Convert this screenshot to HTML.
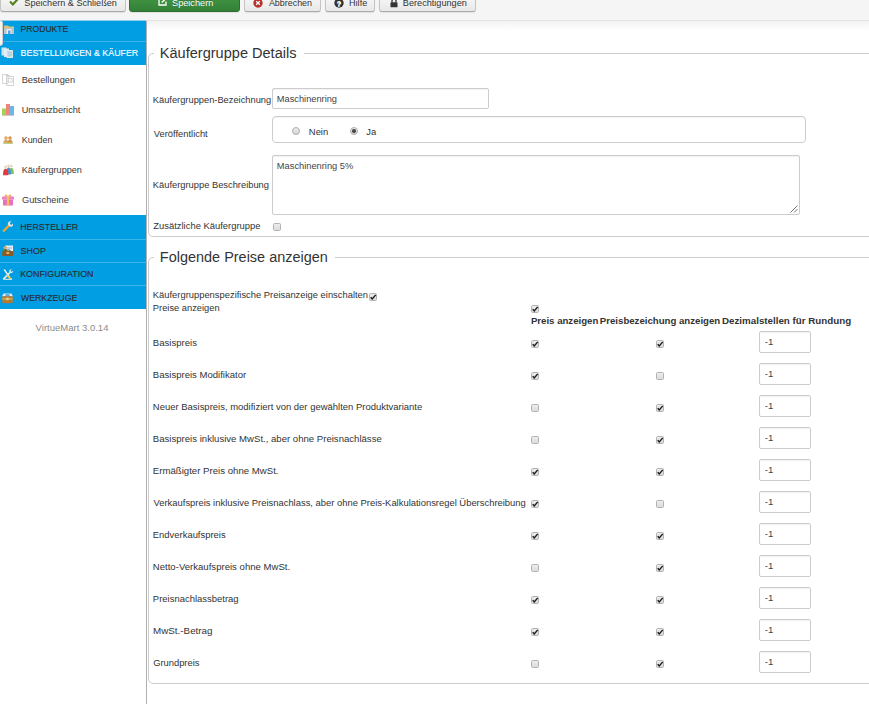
<!DOCTYPE html>
<html lang="de">
<head>
<meta charset="utf-8">
<title>Käufergruppe</title>
<style>
*{box-sizing:border-box;}
html,body{margin:0;padding:0;}
body{width:869px;height:704px;overflow:hidden;background:#fff;font-family:"Liberation Sans",Arial,sans-serif;font-size:11px;color:#333;position:relative;}
#toolbar{position:absolute;left:0;top:0;width:869px;height:21px;background:#f5f5f5;border-bottom:1px solid #e2e2e2;}
#mix{position:absolute;left:0;top:20px;width:146px;height:1px;background:#8fcfee;}
.btn{position:absolute;top:-12px;height:24px;border:1px solid #c4c4c4;border-bottom-color:#a9a9a9;border-radius:3px;background:linear-gradient(#fff,#e8e8e8);font-size:9px;color:#333;line-height:22px;white-space:nowrap;box-shadow:0 1px 1px rgba(0,0,0,.08);text-shadow:0 1px 0 #fff;}
.btn.green{background:linear-gradient(#4aa34a,#337f37);border-color:#2d6f2e;color:#fff;text-shadow:0 -1px 0 rgba(0,0,0,.3);}
.btn span{position:absolute;top:9.5px;line-height:10px;}
.ti{position:absolute;}
#shade{position:absolute;left:147px;top:21px;width:722px;height:10px;background:linear-gradient(#f3f3f3,#fff);}
#side{position:absolute;left:0;top:0;width:146px;height:704px;}
.hdbg{position:absolute;left:0;width:146px;background:#019ee3;}
.hd{position:absolute;left:21px;height:12px;line-height:12px;font-size:8.75px;color:#333;white-space:nowrap;}
.hd.act{color:#fff;}
.sep{position:absolute;left:0;width:146px;height:1px;background:#3bb3ea;}
.it{position:absolute;left:22.500px;height:12px;line-height:12px;font-size:9.100px;color:#444;white-space:nowrap;}
.si{position:absolute;}
#tab{position:absolute;left:-2px;top:20px;width:5.200px;height:26px;background:#f6f6f6;border:1px solid #d0d0d0;border-radius:0 3px 3px 0;}
#vline{position:absolute;left:146px;top:21px;width:1px;height:690px;background:#b0b0b0;}
#ver{position:absolute;left:0;top:321px;width:146px;text-align:center;font-size:9.5px;color:#8a8a8a;}
.fs{position:absolute;left:148px;width:740px;border:1px solid #ccc;border-radius:5px;}
.gap{position:absolute;height:1px;background:#fff;}
.lbl{position:absolute;font-size:9.4px;color:#333;white-space:nowrap;}
.inp{position:absolute;border:1px solid #ccc;border-radius:2px;background:#fff;box-shadow:inset 0 1px 1px rgba(0,0,0,.05);}
.cb{position:absolute;width:8px;height:8px;border:1px solid #b2b2b2;border-radius:1.5px;background:linear-gradient(#ececec,#dcdcdc);}
.cb.on:after{content:"";position:absolute;left:1.6px;top:-1.2px;width:2.6px;height:5.2px;border:solid #222;border-width:0 1.5px 1.5px 0;transform:rotate(40deg);}
.lbl.b{font-weight:bold;}
.rd{position:absolute;width:8px;height:8px;border:1px solid #adadad;border-radius:50%;background:linear-gradient(#ececec,#d6d6d6);}
.rd.on:after{content:"";position:absolute;left:1.3px;top:1.3px;width:3.4px;height:3.4px;border-radius:50%;background:#4a4a4a;}
.t{position:absolute;white-space:nowrap;height:20px;line-height:20px;}
</style>
</head>
<body>
<div id="toolbar">
 <div class="btn" style="left:0px;width:126px;"><svg class="ti" style="left:8px;top:8px;" width="11" height="9" viewBox="0 0 11 9"><path d="M1 4.6L3.9 7.4L9.6 1.2" stroke="#567d1d" stroke-width="2.1" fill="none"/></svg></div>
 <div class="btn green" style="left:129px;width:111px;"><svg class="ti" style="left:28px;top:8px;" width="9" height="9" viewBox="0 0 9 9"><path d="M6 1H1V8H8V4.5" stroke="#fff" stroke-width="1.3" fill="none"/><path d="M3.5 6L4 4.3L7.6 0.6L8.6 1.6L5 5.4Z" fill="#fff"/></svg></div>
 <div class="btn" style="left:244px;width:77px;"><svg class="ti" style="left:8px;top:8.500px;" width="10" height="10" viewBox="0 0 10 10"><circle cx="5" cy="5" r="4.7" fill="#b5332c"/><path d="M3.2 3.2L6.8 6.8M6.8 3.2L3.2 6.8" stroke="#fff" stroke-width="1.3"/></svg></div>
 <div class="btn" style="left:325px;width:50px;"><svg class="ti" style="left:8px;top:8.500px;" width="10" height="10" viewBox="0 0 10 10"><circle cx="5" cy="5" r="4.7" fill="#333"/><text x="5" y="8" font-size="8" font-weight="bold" font-family="Liberation Sans, sans-serif" text-anchor="middle" fill="#fff">?</text></svg></div>
 <div class="btn" style="left:379px;width:97px;"><svg class="ti" style="left:10px;top:8.500px;" width="8" height="10" viewBox="0 0 8 10"><path d="M2 4.5V3a2 2 0 0 1 4 0V4.5" stroke="#333" stroke-width="1.3" fill="none"/><rect x="0.5" y="4.3" width="7" height="5" rx="0.6" fill="#333"/></svg></div>
</div>
<div id="shade"></div><div id="mix"></div>
<div id="side">
 <div class="hdbg" style="top:21px;height:21px;"></div>
 <div class="hdbg" style="top:42px;height:22.5px;"></div>
 <div class="hdbg" style="top:214.5px;height:23.7px;"></div>
 <div class="hdbg" style="top:238.2px;height:23.7px;"></div>
 <div class="hdbg" style="top:261.9px;height:23.7px;"></div>
 <div class="hdbg" style="top:285.6px;height:23.7px;"></div>
 <div class="sep" style="top:41px;"></div>
 <div class="sep" style="top:239px;"></div>
 <div class="sep" style="top:262px;"></div>
 <div class="sep" style="top:285px;"></div>
 <svg class="si" style="left:4px;top:24px;" width="10" height="10" viewBox="0 0 10 10"><path d="M0 1.5h4l1 1h5v3H0z" fill="#d9c27a"/><rect x="0" y="4" width="10" height="6" fill="#b9c3c9"/><rect x="2.5" y="5" width="5" height="5" fill="#e8edf0"/><rect x="4" y="6.5" width="2.5" height="3.5" fill="#5aa7e0"/></svg>
 <svg class="si" style="left:1px;top:47px;" width="13" height="11" viewBox="0 0 13 11"><rect x="0.5" y="0.5" width="5" height="8" fill="#cfe3ef"/><rect x="3" y="1.5" width="5" height="8.5" fill="#e4eef4"/><rect x="5.5" y="3" width="6.5" height="8" fill="#dbe6ec"/><rect x="6.5" y="4.5" width="4.5" height="5" fill="#b7d3e3"/></svg>
 <svg class="si" style="left:2px;top:73.5px;" width="12" height="12" viewBox="0 0 12 12"><path d="M0.5 0.5h5.5v9h-5.5z M3.5 1.5h4l1.5 1.5M4.5 2.5h7v9h-7z M6.2 4.5h4v3.5h-4z" fill="none" stroke="#cfcfcf" stroke-width="0.9"/></svg>
 <svg class="si" style="left:2px;top:104px;" width="12" height="12" viewBox="0 0 12 12"><rect x="0" y="4.5" width="4" height="7" fill="#a4d05a"/><rect x="4" y="0" width="4" height="11.5" fill="#ef8778"/><rect x="8" y="2" width="4" height="9.5" fill="#6bb7ea"/><rect x="0" y="11" width="12" height="0.8" fill="#c8c8c8"/></svg>
 <svg class="si" style="left:3px;top:135.5px;" width="10" height="8" viewBox="0 0 10 8"><circle cx="3" cy="2" r="1.8" fill="#e0a85c"/><circle cx="7" cy="2" r="1.8" fill="#d99a4e"/><path d="M0.3 7.5c0-3 1.2-4 2.7-4s2.4 1 2.4 4z" fill="#dba763"/><path d="M4.6 7.5c0-3 1-4 2.4-4s2.7 1 2.7 4z" fill="#d19550"/><rect x="0.3" y="6.7" width="9.4" height="1" fill="#b5cf7a"/></svg>
 <svg class="si" style="left:3px;top:164px;" width="11" height="11.5" viewBox="0 0 11 11.5"><circle cx="8.3" cy="2.2" r="1.4" fill="#e9d9c0"/><path d="M6 10c0-4.5 1-6 2.4-6s2.4 1.500 2.400 6z" fill="#7fc25a"/><circle cx="5.500" cy="1.800" r="1.400" fill="#ead6bb"/><path d="M3.200 10.500c0-5 1-7 2.400-7s2.400 2 2.400 7z" fill="#4d8fd6"/><circle cx="2.600" cy="3" r="1.400" fill="#ecd8c0"/><path d="M0 11.300c0-4.500 1-6.500 2.600-6.500s2.700 2 2.700 6.500z" fill="#e23b3b"/></svg>
 <svg class="si" style="left:2px;top:194px;" width="12" height="11.5" viewBox="0 0 12 11.5"><path d="M3 2.500c-1.500-2.500 2-3 3 0c1-3 4.500-2.500 3 0z" fill="#e8b84a"/><rect x="0" y="2.500" width="12" height="3" rx="0.500" fill="#f07fc7"/><rect x="1" y="5.500" width="10" height="6" fill="#ea6fc0"/><rect x="4.800" y="2.500" width="2.400" height="9" fill="#f0c35a"/></svg>
 <svg class="si" style="left:1.500px;top:221px;" width="11.500" height="11" viewBox="0 0 11.500 11"><path d="M0.800 9.200L6.200 3.600L7.800 5.200L2.400 10.700Q1.400 11.200 0.800 10.400Q0.300 9.800 0.800 9.200z" fill="#f2a62e"/><path d="M6 3.800C5.200 1.800 7 -0.300 9.300 0.400L7.800 2L8.300 3.400L9.700 3.800L11.200 2.300C11.800 4.600 9.800 6.300 7.700 5.600z" fill="#dfe6ea"/></svg>
 <svg class="si" style="left:1.500px;top:245px;" width="11.500" height="11" viewBox="0 0 11.500 11"><rect x="3.500" y="0.500" width="7.500" height="6" fill="#e9f2f8"/><rect x="4.500" y="2.500" width="5.500" height="1" fill="#7db6e0"/><circle cx="3" cy="2.600" r="1.700" fill="#d9a066"/><path d="M0.500 7c0-2 1-3 2.500-3s2.500 1 2.500 3z" fill="#5d8a3a"/><rect x="0.300" y="6" width="11" height="5" rx="0.600" fill="#8a5a2b"/><rect x="4.300" y="7" width="3" height="2" fill="#d9b25a"/><path d="M3.500 6V5h4.500v1" stroke="#5a3a1a" stroke-width="0.800" fill="none"/></svg>
 <svg class="si" style="left:1.500px;top:268.500px;" width="11.500" height="11" viewBox="0 0 11.500 11"><path d="M1.500 0.800L3 0.300L8.500 8.500L10.500 10.500L8.500 9.800L7 8.800z" fill="#eef3f6"/><path d="M9.800 0.300C8 0 6.800 1.500 7.300 3L1 9.300Q0.500 10.300 1.500 10.700Q2.200 10.800 2.600 10.300L8.500 4C10 4.500 11.500 3 11 1.500L9.800 2.800L8.800 2.400L8.600 1.500z" fill="#e3eaee"/><path d="M5.500 6L9.500 9.500L8.300 10.700L4.500 7z" fill="#e8c23a"/><rect x="2" y="9.800" width="8" height="1.100" fill="#d8e4ea"/></svg>
 <svg class="si" style="left:1.500px;top:293px;" width="11" height="10.500" viewBox="0 0 11 10.500"><path d="M1.500 0.500h8l1.500 3h-11z" fill="#dfeaf2"/><rect x="3.500" y="1" width="4" height="3" fill="#6aa8dc"/><rect x="0.300" y="3.200" width="10.400" height="7" rx="0.800" fill="#b07a32"/><rect x="0.300" y="5.300" width="10.400" height="1.200" fill="#e3b85a"/><rect x="4.300" y="4.600" width="2.400" height="2.600" fill="#f1d27a"/></svg>
 <div id="tab"></div>
</div>
<div id="vline"></div>

<div class="fs" style="top:53px;height:184px;"></div><div class="gap" style="top:53px;left:154px;width:150px;"></div>
<div class="fs" style="top:257px;height:427px;"></div><div class="gap" style="top:257px;left:154px;width:181px;"></div>




<!--GEN-->
<div class="inp" style="left:272px;top:88px;width:217px;height:21px;"></div>
<div class="inp" style="left:272px;top:116px;width:534px;height:26.6px;border-radius:4px;"></div>
<div class="rd" style="left:292px;top:127px;"></div>
<div class="rd on" style="left:350px;top:127px;"></div>
<div class="inp" style="left:272px;top:155px;width:528px;height:59.7px;"><svg style="position:absolute;right:1px;bottom:1px;" width="9" height="9" viewBox="0 0 9 9"><path d="M8.5 1.5L1.5 8.5M8.5 5L5 8.500" stroke="#666" stroke-width="0.9" fill="none"/></svg></div>
<div class="cb" style="left:272.500px;top:223.300px;"></div>
<div class="cb" style="left:369.200px;top:292.500px;"><svg width="8" height="8" viewBox="0 0 8 8" style="position:absolute;left:-1px;top:-1px;overflow:visible"><path d="M1.700 4.200L3.300 5.900L6.700 1.900" stroke="#1c1c1c" stroke-width="1.450" fill="none"/></svg></div>
<div class="cb" style="left:531px;top:305px;"><svg width="8" height="8" viewBox="0 0 8 8" style="position:absolute;left:-1px;top:-1px;overflow:visible"><path d="M1.700 4.200L3.300 5.900L6.700 1.900" stroke="#1c1c1c" stroke-width="1.450" fill="none"/></svg></div>
<div class="cb" style="left:531px;top:340px;"><svg width="8" height="8" viewBox="0 0 8 8" style="position:absolute;left:-1px;top:-1px;overflow:visible"><path d="M1.700 4.200L3.300 5.900L6.700 1.900" stroke="#1c1c1c" stroke-width="1.450" fill="none"/></svg></div>
<div class="cb" style="left:656.300px;top:340px;"><svg width="8" height="8" viewBox="0 0 8 8" style="position:absolute;left:-1px;top:-1px;overflow:visible"><path d="M1.700 4.200L3.300 5.900L6.700 1.900" stroke="#1c1c1c" stroke-width="1.450" fill="none"/></svg></div>
<div class="inp" style="left:759px;top:331px;width:52px;height:22px;"></div>
<div class="cb" style="left:531px;top:372px;"><svg width="8" height="8" viewBox="0 0 8 8" style="position:absolute;left:-1px;top:-1px;overflow:visible"><path d="M1.700 4.200L3.300 5.900L6.700 1.900" stroke="#1c1c1c" stroke-width="1.450" fill="none"/></svg></div>
<div class="cb" style="left:656.300px;top:372px;"></div>
<div class="inp" style="left:759px;top:363px;width:52px;height:22px;"></div>
<div class="cb" style="left:531px;top:404px;"></div>
<div class="cb" style="left:656.300px;top:404px;"><svg width="8" height="8" viewBox="0 0 8 8" style="position:absolute;left:-1px;top:-1px;overflow:visible"><path d="M1.700 4.200L3.300 5.900L6.700 1.900" stroke="#1c1c1c" stroke-width="1.450" fill="none"/></svg></div>
<div class="inp" style="left:759px;top:395px;width:52px;height:22px;"></div>
<div class="cb" style="left:531px;top:436px;"></div>
<div class="cb" style="left:656.300px;top:436px;"><svg width="8" height="8" viewBox="0 0 8 8" style="position:absolute;left:-1px;top:-1px;overflow:visible"><path d="M1.700 4.200L3.300 5.900L6.700 1.900" stroke="#1c1c1c" stroke-width="1.450" fill="none"/></svg></div>
<div class="inp" style="left:759px;top:427px;width:52px;height:22px;"></div>
<div class="cb" style="left:531px;top:468px;"><svg width="8" height="8" viewBox="0 0 8 8" style="position:absolute;left:-1px;top:-1px;overflow:visible"><path d="M1.700 4.200L3.300 5.900L6.700 1.900" stroke="#1c1c1c" stroke-width="1.450" fill="none"/></svg></div>
<div class="cb" style="left:656.300px;top:468px;"><svg width="8" height="8" viewBox="0 0 8 8" style="position:absolute;left:-1px;top:-1px;overflow:visible"><path d="M1.700 4.200L3.300 5.900L6.700 1.900" stroke="#1c1c1c" stroke-width="1.450" fill="none"/></svg></div>
<div class="inp" style="left:759px;top:459px;width:52px;height:22px;"></div>
<div class="cb" style="left:531px;top:500px;"><svg width="8" height="8" viewBox="0 0 8 8" style="position:absolute;left:-1px;top:-1px;overflow:visible"><path d="M1.700 4.200L3.300 5.900L6.700 1.900" stroke="#1c1c1c" stroke-width="1.450" fill="none"/></svg></div>
<div class="cb" style="left:656.300px;top:500px;"></div>
<div class="inp" style="left:759px;top:491px;width:52px;height:22px;"></div>
<div class="cb" style="left:531px;top:532px;"><svg width="8" height="8" viewBox="0 0 8 8" style="position:absolute;left:-1px;top:-1px;overflow:visible"><path d="M1.700 4.200L3.300 5.900L6.700 1.900" stroke="#1c1c1c" stroke-width="1.450" fill="none"/></svg></div>
<div class="cb" style="left:656.300px;top:532px;"><svg width="8" height="8" viewBox="0 0 8 8" style="position:absolute;left:-1px;top:-1px;overflow:visible"><path d="M1.700 4.200L3.300 5.900L6.700 1.900" stroke="#1c1c1c" stroke-width="1.450" fill="none"/></svg></div>
<div class="inp" style="left:759px;top:523px;width:52px;height:22px;"></div>
<div class="cb" style="left:531px;top:564px;"></div>
<div class="cb" style="left:656.300px;top:564px;"><svg width="8" height="8" viewBox="0 0 8 8" style="position:absolute;left:-1px;top:-1px;overflow:visible"><path d="M1.700 4.200L3.300 5.900L6.700 1.900" stroke="#1c1c1c" stroke-width="1.450" fill="none"/></svg></div>
<div class="inp" style="left:759px;top:555px;width:52px;height:22px;"></div>
<div class="cb" style="left:531px;top:596px;"><svg width="8" height="8" viewBox="0 0 8 8" style="position:absolute;left:-1px;top:-1px;overflow:visible"><path d="M1.700 4.200L3.300 5.900L6.700 1.900" stroke="#1c1c1c" stroke-width="1.450" fill="none"/></svg></div>
<div class="cb" style="left:656.300px;top:596px;"><svg width="8" height="8" viewBox="0 0 8 8" style="position:absolute;left:-1px;top:-1px;overflow:visible"><path d="M1.700 4.200L3.300 5.900L6.700 1.900" stroke="#1c1c1c" stroke-width="1.450" fill="none"/></svg></div>
<div class="inp" style="left:759px;top:587px;width:52px;height:22px;"></div>
<div class="cb" style="left:531px;top:628px;"><svg width="8" height="8" viewBox="0 0 8 8" style="position:absolute;left:-1px;top:-1px;overflow:visible"><path d="M1.700 4.200L3.300 5.900L6.700 1.900" stroke="#1c1c1c" stroke-width="1.450" fill="none"/></svg></div>
<div class="cb" style="left:656.300px;top:628px;"><svg width="8" height="8" viewBox="0 0 8 8" style="position:absolute;left:-1px;top:-1px;overflow:visible"><path d="M1.700 4.200L3.300 5.900L6.700 1.900" stroke="#1c1c1c" stroke-width="1.450" fill="none"/></svg></div>
<div class="inp" style="left:759px;top:619px;width:52px;height:22px;"></div>
<div class="cb" style="left:531px;top:660px;"></div>
<div class="cb" style="left:656.300px;top:660px;"><svg width="8" height="8" viewBox="0 0 8 8" style="position:absolute;left:-1px;top:-1px;overflow:visible"><path d="M1.700 4.200L3.300 5.900L6.700 1.900" stroke="#1c1c1c" stroke-width="1.450" fill="none"/></svg></div>
<div class="inp" style="left:759px;top:651px;width:52px;height:22px;"></div>
<span class="t" style="left:24.34px;top:-7.45px;font-size:9.10px;color:#333;">Speichern &amp; Schließen</span>
<span class="t" style="left:172.03px;top:-7.48px;font-size:9.19px;color:#fff;text-shadow:0 -1px 0 rgba(0,0,0,.25);">Speichern</span>
<span class="t" style="left:268.90px;top:-7.39px;font-size:8.93px;color:#333;">Abbrechen</span>
<span class="t" style="left:349.08px;top:-7.44px;font-size:9.05px;color:#333;">Hilfe</span>
<span class="t" style="left:402.86px;top:-7.46px;font-size:9.13px;color:#333;">Berechtigungen</span>
<span class="t" style="left:20.60px;top:18.52px;font-size:8.59px;color:#2b2b2b;-webkit-text-stroke:0.12px #2b2b2b;">PRODUKTE</span>
<span class="t" style="left:20.58px;top:42.53px;font-size:8.87px;color:#fff;-webkit-text-stroke:0.12px #fff;">BESTELLUNGEN &amp; KÄUFER</span>
<span class="t" style="left:21.65px;top:70.49px;font-size:9.25px;color:#383838;">Bestellungen</span>
<span class="t" style="left:21.75px;top:99.52px;font-size:9.19px;color:#383838;">Umsatzbericht</span>
<span class="t" style="left:21.68px;top:129.60px;font-size:8.95px;color:#383838;">Kunden</span>
<span class="t" style="left:21.67px;top:159.54px;font-size:9.12px;color:#383838;">Käufergruppen</span>
<span class="t" style="left:21.94px;top:190.49px;font-size:9.27px;color:#383838;">Gutscheine</span>
<span class="t" style="left:20.18px;top:216.73px;font-size:8.86px;color:#2b2b2b;-webkit-text-stroke:0.12px #2b2b2b;">HERSTELLER</span>
<span class="t" style="left:20.54px;top:240.50px;font-size:8.95px;color:#2b2b2b;-webkit-text-stroke:0.12px #2b2b2b;">SHOP</span>
<span class="t" style="left:20.20px;top:264.12px;font-size:8.89px;color:#2b2b2b;-webkit-text-stroke:0.12px #2b2b2b;">KONFIGURATION</span>
<span class="t" style="left:20.92px;top:287.77px;font-size:8.75px;color:#2b2b2b;-webkit-text-stroke:0.12px #2b2b2b;">WERKZEUGE</span>
<span class="t" style="left:35.61px;top:317.70px;font-size:9.53px;color:#8c8c8c;">VirtueMart 3.0.14</span>
<span class="t" style="left:159.84px;top:42.96px;font-size:14.55px;color:#333;">Käufergruppe Details</span>
<span class="t" style="left:159.87px;top:246.79px;font-size:14.46px;color:#333;">Folgende Preise anzeigen</span>
<span class="t" style="left:152.82px;top:89.77px;font-size:9.31px;color:#333;">Käufergruppen-Bezeichnung</span>
<span class="t" style="left:276.86px;top:89.19px;font-size:9.25px;color:#444;">Maschinenring</span>
<span class="t" style="left:153.79px;top:123.65px;font-size:9.37px;color:#333;">Veröffentlicht</span>
<span class="t" style="left:308.85px;top:121.74px;font-size:9.42px;color:#333;">Nein</span>
<span class="t" style="left:366.31px;top:121.74px;font-size:9.42px;color:#333;">Ja</span>
<span class="t" style="left:276.85px;top:155.78px;font-size:9.29px;color:#444;">Maschinenring 5%</span>
<span class="t" style="left:152.83px;top:174.76px;font-size:9.34px;color:#333;">Käufergruppe Beschreibung</span>
<span class="t" style="left:153.31px;top:216.34px;font-size:9.41px;color:#333;">Zusätzliche Käufergruppe</span>
<span class="t" style="left:152.81px;top:284.75px;font-size:9.38px;color:#333;">Käufergruppenspezifische Preisanzeige einschalten</span>
<span class="t" style="left:152.87px;top:297.57px;font-size:9.32px;color:#333;">Preise anzeigen</span>
<span class="t" style="left:530.91px;top:310.66px;font-size:9.65px;color:#333;font-weight:bold;">Preis anzeigen</span>
<span class="t" style="left:599.85px;top:310.66px;font-size:9.63px;color:#333;font-weight:bold;">Preisbezeichung anzeigen</span>
<span class="t" style="left:721.99px;top:310.61px;font-size:9.78px;color:#333;font-weight:bold;">Dezimalstellen für Rundung</span>
<span class="t" style="left:152.84px;top:333.38px;font-size:9.59px;color:#333;">Basispreis</span>
<span class="t" style="left:764.82px;top:331.67px;font-size:9.60px;color:#444;">-1</span>
<span class="t" style="left:152.82px;top:365.39px;font-size:9.55px;color:#333;">Basispreis Modifikator</span>
<span class="t" style="left:764.82px;top:363.67px;font-size:9.60px;color:#444;">-1</span>
<span class="t" style="left:152.80px;top:397.42px;font-size:9.48px;color:#333;">Neuer Basispreis, modifiziert von der gewählten Produktvariante</span>
<span class="t" style="left:764.82px;top:395.67px;font-size:9.60px;color:#444;">-1</span>
<span class="t" style="left:152.86px;top:429.38px;font-size:9.58px;color:#333;">Basispreis inklusive MwSt., aber ohne Preisnachlässe</span>
<span class="t" style="left:764.82px;top:427.67px;font-size:9.60px;color:#444;">-1</span>
<span class="t" style="left:152.84px;top:461.36px;font-size:9.64px;color:#333;">Ermäßigter Preis ohne MwSt.</span>
<span class="t" style="left:764.82px;top:459.67px;font-size:9.60px;color:#444;">-1</span>
<span class="t" style="left:153.51px;top:493.44px;font-size:9.42px;color:#333;">Verkaufspreis inklusive Preisnachlass, aber ohne Preis-Kalkulationsregel Überschreibung</span>
<span class="t" style="left:764.82px;top:491.67px;font-size:9.60px;color:#444;">-1</span>
<span class="t" style="left:152.84px;top:525.43px;font-size:9.43px;color:#333;">Endverkaufspreis</span>
<span class="t" style="left:764.82px;top:523.67px;font-size:9.60px;color:#444;">-1</span>
<span class="t" style="left:152.80px;top:557.38px;font-size:9.58px;color:#333;">Netto-Verkaufspreis ohne MwSt.</span>
<span class="t" style="left:764.82px;top:555.67px;font-size:9.60px;color:#444;">-1</span>
<span class="t" style="left:152.84px;top:589.42px;font-size:9.48px;color:#333;">Preisnachlassbetrag</span>
<span class="t" style="left:764.82px;top:587.67px;font-size:9.60px;color:#444;">-1</span>
<span class="t" style="left:153.03px;top:621.29px;font-size:9.84px;color:#333;">MwSt.-Betrag</span>
<span class="t" style="left:764.82px;top:619.67px;font-size:9.60px;color:#444;">-1</span>
<span class="t" style="left:153.13px;top:653.45px;font-size:9.37px;color:#333;">Grundpreis</span>
<span class="t" style="left:764.82px;top:651.67px;font-size:9.60px;color:#444;">-1</span>
<!--/GEN-->
</body>
</html>
